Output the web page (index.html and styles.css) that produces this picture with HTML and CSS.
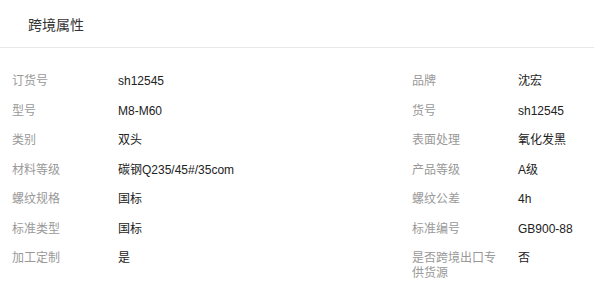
FILE: index.html
```html
<!DOCTYPE html>
<html lang="zh-CN">
<head>
<meta charset="utf-8">
<link rel="stylesheet" href="styles.css">
</head>
<body>
<div class="panel">
  <div class="panel-head">跨境属性</div>
  <div class="attrs">
    <div class="attr"><div class="label">订货号</div><div class="value">sh12545</div></div>
    <div class="attr"><div class="label">品牌</div><div class="value">沈宏</div></div>
    <div class="attr"><div class="label">型号</div><div class="value">M8-M60</div></div>
    <div class="attr"><div class="label">货号</div><div class="value">sh12545</div></div>
    <div class="attr"><div class="label">类别</div><div class="value">双头</div></div>
    <div class="attr"><div class="label">表面处理</div><div class="value">氧化发黑</div></div>
    <div class="attr"><div class="label">材料等级</div><div class="value">碳钢Q235/45#/35com</div></div>
    <div class="attr"><div class="label">产品等级</div><div class="value">A级</div></div>
    <div class="attr"><div class="label">螺纹规格</div><div class="value">国标</div></div>
    <div class="attr"><div class="label">螺纹公差</div><div class="value">4h</div></div>
    <div class="attr"><div class="label">标准类型</div><div class="value">国标</div></div>
    <div class="attr"><div class="label">标准编号</div><div class="value">GB900-88</div></div>
    <div class="attr"><div class="label">加工定制</div><div class="value">是</div></div>
    <div class="attr"><div class="label">是否跨境出口专供货源</div><div class="value">否</div></div>
  </div>
</div>
</body>
</html>
```
FILE: styles.css
```css
html, body {
  margin: 0;
  padding: 0;
  background: #fff;
}
body {
  font-family: "Liberation Sans", "Noto Sans CJK SC", sans-serif;
  font-size: 12px;
  color: #333;
}
.panel {
  width: 594px;
}
.panel-head {
  height: 47px;
  display: flex;
  align-items: center;
  padding-left: 28px;
  font-size: 14px;
  color: #333;
  border-bottom: 1px solid #e8e8e8;
}
.attrs {
  display: grid;
  grid-template-columns: 400px 1fr;
  padding: 26px 0 0 12px;
  row-gap: 14.5px;
}
.attr {
  display: flex;
  line-height: 15px;
}
.label {
  width: 90px;
  margin-right: 16px;
  color: #999;
  flex-shrink: 0;
}
.value {
  color: #222;
}
```
